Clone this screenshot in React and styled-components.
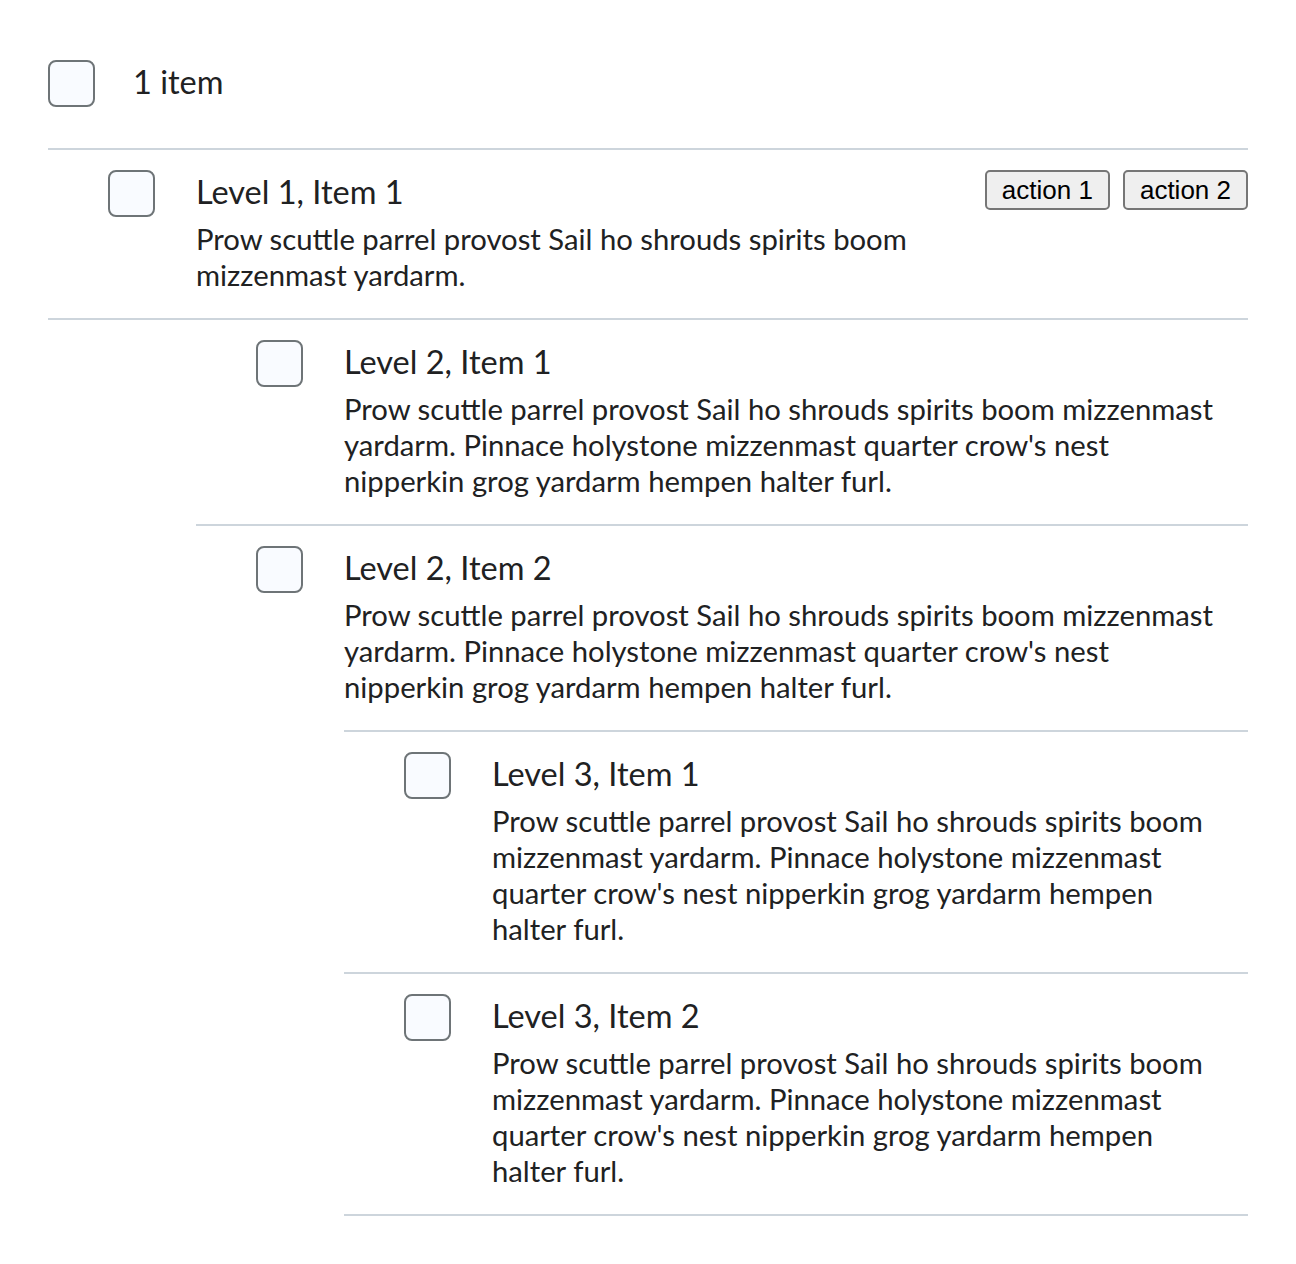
import styled, { createGlobalStyle } from "styled-components";

const TEXT =
  "Prow scuttle parrel provost Sail ho shrouds spirits boom mizzenmast yardarm.";
const LONG_TEXT =
  "Prow scuttle parrel provost Sail ho shrouds spirits boom mizzenmast yardarm. Pinnace holystone mizzenmast quarter crow's nest nipperkin grog yardarm hempen halter furl.";

const GlobalStyle = createGlobalStyle`
  body {
    margin: 0;
    background: #ffffff;
    color: #202122;
    font-family: Lato, "Noto Sans", sans-serif;
  }
`;

const Page = styled.div`
  padding: 60px 48px 48px;
`;

const Header = styled.div`
  display: flex;
  align-items: center;
  gap: 38px;
  padding-bottom: 41px;
  border-bottom: 2px solid #cdd5dc;
`;

const HeaderLabel = styled.span`
  font-size: 32.5px;
  line-height: 44px;
  margin-bottom: 3px;
`;

const Checkbox = styled.span`
  flex: none;
  box-sizing: border-box;
  width: 47px;
  height: 47px;
  border: 2px solid #6e7477;
  border-radius: 8px;
  background: #f9fbff;
`;

const List = styled.ul`
  list-style: none;
  margin: 0;
  padding: 0;
  border-top: ${({ $topDivider }) =>
    $topDivider ? "2px solid #cdd5dc" : "none"};
`;

const NestedList = styled(List)`
  margin-left: 148px;
`;

const Row = styled.div`
  display: flex;
  align-items: flex-start;
  padding: 20px 0 25px 60px;
  border-bottom: ${({ $divider }) =>
    $divider ? "2px solid #cdd5dc" : "none"};
`;

const Content = styled.div`
  flex: 1;
  min-width: 0;
  margin-left: 41px;
  padding-right: 24px;
`;

const Title = styled.div`
  font-size: 32.5px;
  line-height: 44px;
  margin-bottom: 2px;
`;

const Body = styled.p`
  margin: 7px 0 0;
  font-size: 29.25px;
  line-height: 36px;
`;

const Actions = styled.div`
  display: flex;
  gap: 13px;
  margin-left: 48px;
`;

const ActionButton = styled.button`
  font-family: "Liberation Sans", Arial, sans-serif;
  font-size: 26px;
  line-height: 32px;
  padding: 2px 15px 2px;
  color: #000000;
  background: #efefef;
  border: 2px solid #767676;
  border-radius: 5px;
`;

const Item = ({ title, text, divider, actions, children }) => (
  <li>
    <Row $divider={divider}>
      <Checkbox role="checkbox" aria-checked="false" />
      <Content>
        <Title>{title}</Title>
        <Body>{text}</Body>
      </Content>
      {actions && (
        <Actions>
          {actions.map((label) => (
            <ActionButton key={label}>{label}</ActionButton>
          ))}
        </Actions>
      )}
    </Row>
    {children}
  </li>
);

export default function App() {
  return (
    <>
      <GlobalStyle />
      <Page>
        <Header>
          <Checkbox role="checkbox" aria-checked="false" />
          <HeaderLabel>1 item</HeaderLabel>
        </Header>
        <List>
          <Item
            title="Level 1, Item 1"
            text={TEXT}
            divider
            actions={["action 1", "action 2"]}
          >
            <NestedList>
              <Item title="Level 2, Item 1" text={LONG_TEXT} divider />
              <Item title="Level 2, Item 2" text={LONG_TEXT}>
                <NestedList $topDivider>
                  <Item title="Level 3, Item 1" text={LONG_TEXT} divider />
                  <Item title="Level 3, Item 2" text={LONG_TEXT} divider />
                </NestedList>
              </Item>
            </NestedList>
          </Item>
        </List>
      </Page>
    </>
  );
}
